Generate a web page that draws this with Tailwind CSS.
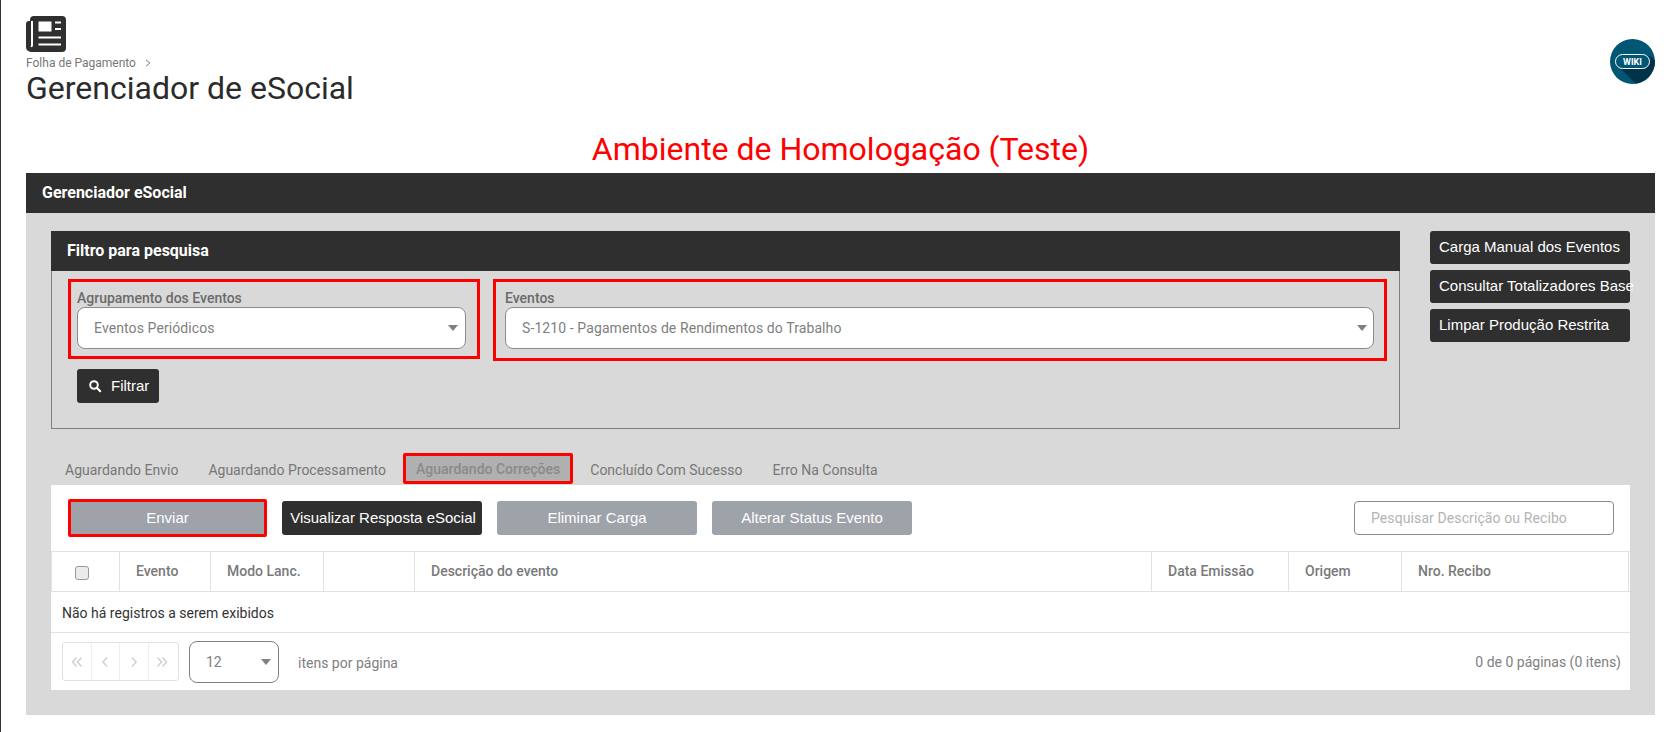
<!DOCTYPE html>
<html lang="en">
<head>
  <meta charset="UTF-8" />
  <title>Gerenciador de eSocial</title>
  <script src="https://cdn.jsdelivr.net/npm/@tailwindcss/browser@4"></script>
</head>
<body class="bg-white text-[#212529] font-['Roboto',sans-serif] h-[732px] overflow-hidden border-l border-[#333333]">
  <!-- page header -->
  <header class="flex justify-between pl-[25px] pr-[22px] pt-4 h-[129px]">
    <div>
      <svg class="w-10 h-9 block" viewBox="0 0 40 36">
        <path fill="#2f2f2f" d="M8 0h28a4 4 0 0 1 4 4v28a4 4 0 0 1-4 4H5a5 5 0 0 1-5-5V8a3 3 0 0 1 3-3h1V4a4 4 0 0 1 4-4z"/>
        <path fill="#fff" d="M5 5h2v24a3 3 0 0 1-1 2.2A2 2 0 0 1 4.500 30.500 3 3 0 0 0 5 29z"/>
        <path fill="#fff" d="M12.500 5.500h13v10h-13zM29 5.500h6v2h-6zM29 12h6v2h-6zM12.500 20.500H35v2H12.500zM12.500 27.500H35v2H12.500z"/>
      </svg>
      <div class="flex items-center text-xs leading-4 text-[#777777] mt-[3px]">
        Folha de Pagamento
        <svg class="w-2 h-2 ml-2" viewBox="0 0 8 8"><path d="M2 .8 5.800 4 2 7.200" fill="none" stroke="#777777" stroke-width="1"/></svg>
      </div>
      <h1 class="text-[32px] leading-[38px] text-[#2b2b2b] -mt-[2px]">Gerenciador de eSocial</h1>
    </div>
    <svg class="w-[45px] h-[45px] mt-[23px]" viewBox="0 0 45 45">
      <defs><clipPath id="wikiClip"><circle cx="22.500" cy="22.500" r="22.500"/></clipPath></defs>
      <circle cx="22.500" cy="22.500" r="22.500" fill="#005673"/>
      <path clip-path="url(#wikiClip)" d="M10 29 27 46H46V22L40 17z" fill="#00334a"/>
      <rect x="5.500" y="15.500" width="34" height="14" rx="7" fill="#005673" stroke="#fff" stroke-width="1"/>
      <text x="22.500" y="25.800" text-anchor="middle" fill="#fff" font-family="Roboto" font-size="9" font-weight="700">WIKI</text>
    </svg>
  </header>

  <h2 class="h-11 pl-[3px] text-center text-[32px] leading-[40px] text-[#ff0000]">Ambiente de Homologação (Teste)</h2>

  <!-- main panel -->
  <section class="ml-[25px] w-[1629px] h-[542px] bg-[#d9d9d9]">
    <div class="h-10 bg-[#2f2f2f] text-white text-base font-bold leading-10 pl-4">Gerenciador eSocial</div>

    <div class="flex pl-[25px] pt-[18px]">
      <div class="w-[1349px] h-[198px] border border-[#808080]">
        <div class="h-10 -mt-px -mx-px bg-[#2f2f2f] text-white text-base font-bold leading-10 pl-4">Filtro para pesquisa</div>
        <div class="flex items-start pt-2 pl-4">
          <div class="w-[412px] h-20 border-[3px] border-[#ff0000] pl-[6px] pt-2">
            <label class="block text-sm font-medium text-[#6b6b6b] leading-[17px]">Agrupamento dos Eventos</label>
            <div class="w-[389px] h-[42px] flex items-center justify-between bg-white border border-[#8c8c8c] rounded-lg pl-4 pr-[7px] text-sm tracking-[0.1px] text-[#808080]">
              Eventos Periódicos
              <span class="border-x-[5.500px] border-t-[6px] border-x-transparent border-t-[#808080]"></span>
            </div>
          </div>
          <div class="w-[894px] h-[82px] ml-[13px] border-[3px] border-[#ff0000] pl-[9px] pt-2">
            <label class="block text-sm font-medium text-[#6b6b6b] leading-[17px]">Eventos</label>
            <div class="w-[869px] h-[42px] flex items-center justify-between bg-white border border-[#8c8c8c] rounded-lg pl-4 pr-[6px] text-sm tracking-[0.1px] text-[#808080]">
              S-1210 - Pagamentos de Rendimentos do Trabalho
              <span class="border-x-[5.500px] border-t-[6px] border-x-transparent border-t-[#808080]"></span>
            </div>
          </div>
        </div>
        <button class="flex items-center w-[82px] h-[34px] ml-[25px] mt-2 bg-[#2f2f2f] rounded-[3px] text-white font-['Liberation_Sans',sans-serif] text-[15px] pl-[11px]">
          <svg class="w-[14px] h-[14px] mr-[9px]" viewBox="0 0 14 14"><circle cx="6" cy="6" r="3.800" fill="none" stroke="#fff" stroke-width="2"/><path d="m8.800 8.800 3.400 3.400" stroke="#fff" stroke-width="2.200" stroke-linecap="round"/></svg>
          Filtrar
        </button>
      </div>
      <div class="ml-[30px] flex flex-col gap-[6px] font-['Liberation_Sans',sans-serif] text-[15px] text-white">
        <button class="w-[200px] h-[33px] bg-[#2f2f2f] rounded-[3px] pl-[9px] text-left whitespace-nowrap">Carga Manual dos Eventos</button>
        <button class="w-[200px] h-[33px] bg-[#2f2f2f] rounded-[3px] pl-[9px] text-left whitespace-nowrap">Consultar Totalizadores Base</button>
        <button class="w-[200px] h-[33px] bg-[#2f2f2f] rounded-[3px] pl-[9px] text-left whitespace-nowrap">Limpar Produção Restrita</button>
      </div>
    </div>

    <!-- tabs -->
    <nav class="flex items-end h-14 ml-[25px] text-sm text-[#777777]">
      <span class="pl-[14px] pr-[15px] h-[31px] leading-[33px]">Aguardando Envio</span>
      <span class="px-[15px] h-[31px] leading-[33px]">Aguardando Processamento</span>
      <span class="px-[10px] h-[31px] mb-px leading-[27px] bg-[#b0b0b0] text-[#8a8a8a] font-medium border-[3px] border-[#ff0000] rounded-[2px] ml-[2px]">Aguardando Correções</span>
      <span class="px-[17px] h-[31px] leading-[33px]">Concluído Com Sucesso</span>
      <span class="px-[13px] h-[31px] leading-[33px]">Erro Na Consulta</span>
    </nav>

    <!-- grid -->
    <div class="ml-[25px] w-[1579px] h-[205px] bg-white">
      <div class="flex items-center h-[66px] pl-[17px] font-['Liberation_Sans',sans-serif] text-[15px] text-white">
        <button class="w-[199px] h-[38px] bg-[#9ea2a9] border-[3px] border-[#ff0000] rounded-[2px]">Enviar</button>
        <button class="w-[200px] h-[34px] ml-[15px] pl-[2px] bg-[#2f2f2f] rounded-[3px] whitespace-nowrap">Visualizar Resposta eSocial</button>
        <button class="w-[200px] h-[34px] ml-[15px] bg-[#9ea2a9] rounded-[3px]">Eliminar Carga</button>
        <button class="w-[200px] h-[34px] ml-[15px] bg-[#9ea2a9] rounded-[3px]">Alterar Status Evento</button>
        <div class="w-[260px] h-[34px] ml-auto mr-[16px] border border-[#8c8c8c] rounded-[4px] pl-4 text-sm tracking-[0.1px] leading-[32px] text-[#b3b3b3] font-['Roboto',sans-serif]">Pesquisar Descrição ou Recibo</div>
      </div>
      <div class="grid grid-cols-[68px_91px_113px_91px_737px_137px_113px_227px] h-[41px] border-y border-l border-[#dee2e6] text-sm font-medium text-[#7a7a7a] leading-[39px]">
        <div class="border-r border-[#dee2e6] flex items-center pl-[23px]"><span class="w-[14px] h-[14px] mt-[2px] rounded-[3px] bg-[#e9ecef] border border-[#9a9a9a]"></span></div>
        <div class="border-r border-[#dee2e6] pl-4">Evento</div>
        <div class="border-r border-[#dee2e6] pl-4">Modo Lanc.</div>
        <div class="border-r border-[#dee2e6]"></div>
        <div class="border-r border-[#dee2e6] pl-4">Descrição do evento</div>
        <div class="border-r border-[#dee2e6] pl-4">Data Emissão</div>
        <div class="border-r border-[#dee2e6] pl-4">Origem</div>
        <div class="border-r border-[#dee2e6] pl-4">Nro. Recibo</div>
      </div>
      <div class="h-[41px] border-b border-[#dee2e6] pl-[11px] text-sm leading-[42px] text-[#333333]">Não há registros a serem exibidos</div>
      <div class="flex items-center h-[57px] pl-[11px] pr-[9px] text-sm text-[#808080]">
        <div class="flex w-[117px] h-[39px] border border-[#dee2e6] rounded-[3px]">
          <span class="flex-1 border-r border-[#eeeeee] flex items-center justify-center">
            <svg class="w-3 h-3" viewBox="0 0 12 12"><path d="M5.500 1.500 1.500 6l4 4.500M10.500 1.500 6.500 6l4 4.500" fill="none" stroke="#cfd2d6" stroke-width="1.600"/></svg>
          </span>
          <span class="flex-1 border-r border-[#eeeeee] flex items-center justify-center">
            <svg class="w-3 h-3" viewBox="0 0 12 12"><path d="M8 1.500 4 6l4 4.500" fill="none" stroke="#cfd2d6" stroke-width="1.600"/></svg>
          </span>
          <span class="flex-1 border-r border-[#eeeeee] flex items-center justify-center">
            <svg class="w-3 h-3" viewBox="0 0 12 12"><path d="m4 1.500 4 4.500-4 4.500" fill="none" stroke="#cfd2d6" stroke-width="1.600"/></svg>
          </span>
          <span class="flex-1 flex items-center justify-center pr-[2px]">
            <svg class="w-3 h-3" viewBox="0 0 12 12"><path d="m1.500 1.500 4 4.500-4 4.500M6.500 1.500l4 4.500-4 4.500" fill="none" stroke="#cfd2d6" stroke-width="1.600"/></svg>
          </span>
        </div>
        <div class="flex items-center justify-between w-[90px] h-[42px] ml-[10px] border border-[#808080] rounded-lg pl-4 pr-[7px]">
          12
          <span class="border-x-[5.500px] border-t-[6px] border-x-transparent border-t-[#808080]"></span>
        </div>
        <span class="ml-[19px] mt-[2px]">itens por página</span>
        <span class="ml-auto">0 de 0 páginas (0 itens)</span>
      </div>
    </div>
  </section>
</body>
</html>
